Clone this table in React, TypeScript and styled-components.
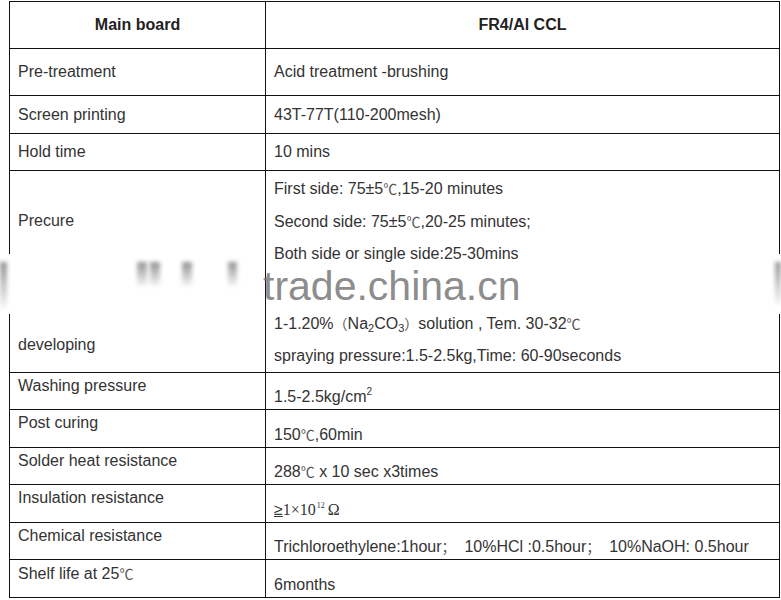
import React from 'react';
import styled, { createGlobalStyle } from 'styled-components';

const GlobalStyle = createGlobalStyle`
  html, body {
    margin: 0;
    padding: 0;
    background: #fff;
  }
  body {
    font-family: 'Liberation Sans', Arial, 'Noto Sans CJK SC', sans-serif;
    color: #333;
  }
`;

type Align = 'center' | 'start' | 'end';

const Page = styled.div`
	position: relative;
	width: 781px;
	height: 600px;
	overflow: hidden;
	background: #fff;
`;

const Table = styled.div`
	margin: 1px 0 0 9px;
	width: 771px;
	box-sizing: border-box;
	border: 1px solid #111;
	border-bottom: none;
	font-size: 16px;
	line-height: 20px;
`;

const Row = styled.div<{ $height: number; $open?: boolean }>`
	display: grid;
	grid-template-columns: 256px 1fr;
	box-sizing: border-box;
	height: ${(p) => p.$height}px;
	border-bottom: ${(p) => (p.$open ? 'none' : '1px solid #111')};
`;

const Cell = styled.div<{ $align: Align; $pad: string; $head?: boolean }>`
	display: flex;
	flex-direction: column;
	justify-content: ${(p) => (p.$align === 'center' ? 'center' : p.$align === 'start' ? 'flex-start' : 'flex-end')};
	align-items: ${(p) => (p.$head ? 'center' : 'flex-start')};
	box-sizing: border-box;
	padding: ${(p) => p.$pad};
	white-space: nowrap;
	font-weight: ${(p) => (p.$head ? 700 : 400)};
	color: ${(p) => (p.$head ? '#222' : '#333')};
`;

const LabelCell = styled(Cell)`
	border-right: 1px solid #111;
`;

const ValueCell = styled(Cell)``;

const Lines = styled.div`
	line-height: 32px;

	sub {
		font-size: 11px;
		line-height: 0;
		vertical-align: -3px;
	}
`;

const Cjk = styled.span`
	font-family: 'Noto Sans CJK SC', sans-serif;
	font-size: 14px;
	color: #555;
`;

const Sup = styled.sup`
	font-size: 10px;
	line-height: 0;
	vertical-align: 7px;
`;

const Ohm = styled.span`
	font-family: 'Liberation Serif', 'Times New Roman', serif;
	font-size: 16px;

	u {
		font-family: 'Liberation Sans', Arial, sans-serif;
		text-decoration-thickness: 1px;
	}
`;

const TinySup = styled.sup`
	font-size: 8px;
	line-height: 0;
	vertical-align: 7px;
	margin: 0 3px 0 1px;
`;

const Pre = styled.span`
	white-space: pre;
`;

const Watermark = styled.div`
	position: absolute;
	left: 0;
	top: 254px;
	width: 781px;
	height: 60px;
	pointer-events: none;
`;

const EdgeMask = styled.div<{ $left: number; $width: number }>`
	position: absolute;
	top: 0;
	left: ${(p) => p.$left}px;
	width: ${(p) => p.$width}px;
	height: 60px;
	background: #fff;
`;

const Smudge = styled.div<{ $left: number; $width: number; $height: number }>`
	position: absolute;
	top: 8px;
	left: ${(p) => p.$left}px;
	width: ${(p) => p.$width}px;
	height: ${(p) => p.$height}px;
	background: linear-gradient(180deg, rgba(110, 110, 110, 0.75), rgba(190, 190, 190, 0.15));
	filter: blur(2px);
`;

const Brand = styled.div`
	position: absolute;
	left: 263px;
	top: 12px;
	font-family: 'Liberation Sans', Arial, sans-serif;
	font-size: 41px;
	line-height: 41px;
	color: rgba(125, 125, 125, 0.9);
`;

interface Side {
	content: React.ReactNode;
	align: Align;
	pad: string;
}

interface SpecRow {
	key: string;
	height: number;
	label: Side;
	value: Side;
	head?: boolean;
	open?: boolean;
}

const Celsius = () => <Cjk>℃</Cjk>;

// upper rows: both cells centred; lower rows: name on top, value at the bottom
const mid = (content: React.ReactNode): Side => ({ content, align: 'center', pad: '0 8px' });
const top = (content: React.ReactNode): Side => ({ content, align: 'start', pad: '3px 8px 0' });
const low = (content: React.ReactNode): Side => ({ content, align: 'end', pad: '0 8px 2px' });

const ROWS: SpecRow[] = [
	{ key: 'head', height: 47, label: mid('Main board'), value: mid('FR4/Al CCL'), head: true },
	{ key: 'pre', height: 47, label: mid('Pre-treatment'), value: mid('Acid treatment -brushing') },
	{ key: 'screen', height: 38, label: mid('Screen printing'), value: mid('43T-77T(110-200mesh)') },
	{ key: 'hold', height: 37, label: mid('Hold time'), value: mid('10 mins') },
	{
		key: 'precure',
		height: 100,
		open: true,
		label: mid('Precure'),
		value: {
			align: 'start',
			pad: '1px 8px 0',
			content: (
				<Lines>
					<div>First side: 75±5<Celsius />,15-20 minutes</div>
					<div>Second side: 75±5<Celsius />,20-25 minutes;</div>
					<div>Both side or single side:25-30mins</div>
				</Lines>
			),
		},
	},
	{
		key: 'developing',
		height: 102,
		label: { content: 'developing', align: 'end', pad: '0 8px 17px' },
		value: {
			align: 'end',
			pad: '0 8px',
			content: (
				<Lines>
					<div>
						1-1.20%<Cjk>（</Cjk>Na<sub>2</sub>CO<sub>3</sub><Cjk>）</Cjk>solution , Tem. 30-32<Celsius />
					</div>
					<div>spraying pressure:1.5-2.5kg,Time: 60-90seconds</div>
				</Lines>
			),
		},
	},
	{
		key: 'washing',
		height: 37,
		label: top('Washing pressure'),
		value: low(
			<span>
				1.5-2.5kg/cm<Sup>2</Sup>
			</span>
		),
	},
	{
		key: 'post',
		height: 38,
		label: top('Post curing'),
		value: low(
			<span>
				150<Celsius />,60min
			</span>
		),
	},
	{
		key: 'solder',
		height: 37,
		label: top('Solder heat resistance'),
		value: low(
			<span>
				288<Celsius /> x 10 sec x3times
			</span>
		),
	},
	{
		key: 'insulation',
		height: 38,
		label: top('Insulation resistance'),
		value: low(
			<Ohm>
				<u>≥</u>1×10<TinySup>12</TinySup>Ω
			</Ohm>
		),
	},
	{
		key: 'chemical',
		height: 37,
		label: top('Chemical resistance'),
		value: low(
			<Pre>
				Trichloroethylene:1hour<Cjk>；</Cjk>  10%HCl :0.5hour<Cjk>；</Cjk>  10%NaOH: 0.5hour
			</Pre>
		),
	},
	{
		key: 'shelf',
		height: 38,
		label: top(
			<span>
				Shelf life at 25<Celsius />
			</span>
		),
		value: low('6months'),
	},
];

const App = () => (
	<>
		<GlobalStyle />
		<Page>
			<Table>
				{ROWS.map(({ key, height, label, value, head, open }) => (
					<Row key={key} $height={height} $open={open}>
						<LabelCell $align={label.align} $pad={label.pad} $head={head}>
							{label.content}
						</LabelCell>
						<ValueCell $align={value.align} $pad={value.pad} $head={head}>
							{value.content}
						</ValueCell>
					</Row>
				))}
			</Table>
			<Watermark>
				<EdgeMask $left={0} $width={24} />
				<EdgeMask $left={764} $width={17} />
				<Smudge $left={0} $width={7} $height={46} />
				<Smudge $left={775} $width={6} $height={42} />
				<Smudge $left={137} $width={10} $height={24} />
				<Smudge $left={150} $width={10} $height={24} />
				<Smudge $left={182} $width={10} $height={24} />
				<Smudge $left={228} $width={9} $height={24} />
				<Brand>trade.china.cn</Brand>
			</Watermark>
		</Page>
	</>
);

export default App;
